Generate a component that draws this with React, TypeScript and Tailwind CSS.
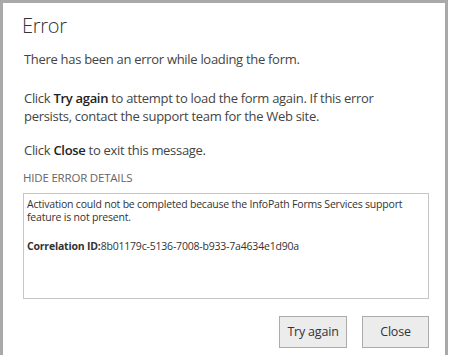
import React from "react";

export default function App() {
  return (
    <div className="w-[451px] h-[355px] bg-white overflow-hidden font-['Open_Sans',sans-serif]">
      <div className="w-[448px] h-[355px] border-l-[3px] border-t-[3px] border-r-[3px] border-[#a9a9a9] bg-white text-[#444]">
        <div className="pl-[20px] pr-[16px] pt-[10px]">
          <div className="text-[20px] leading-[26px] font-light tracking-[-0.3px] text-[#333] -ml-[1px]">Error</div>
          <div className="mt-[11px] text-[13px] leading-[18px] tracking-[-0.3px]">
            <p className="pl-[1px]">There has been an error while loading the form.</p>
            <p className="mt-[21px] pl-[1px]">
              Click <b className="font-semibold text-[#222]">Try again</b> to attempt to load the form again. If this error
              <br />
              persists, contact the support team for the Web site.
            </p>
            <p className="mt-[16px] pl-[1px]">
              Click <b className="font-semibold text-[#222]">Close</b> to exit this message.
            </p>
          </div>
          <div className="mt-[12px] text-[11.5px] leading-[14px] text-[#666] uppercase tracking-[-0.2px]">Hide error details</div>
          <div className="mt-[8px] w-[406px] h-[106px] border border-[#c6c6c6] px-[3px] pt-[4px] text-[10.5px] leading-[13px] tracking-[-0.2px] text-[#333]">
            <div>Activation could not be completed because the InfoPath Forms Services support feature is not present.</div>
            <div className="mt-[16px]">
              <b className="font-bold">Correlation ID:</b>8b01179c-5136-7008-b933-7a4634e1d90a
            </div>
          </div>
          <div className="mt-[17px] w-[406px] flex justify-end gap-[15px]">
            <button className="w-[68px] h-[32px] border border-[#ababab] bg-[#ececec] text-[12.5px] tracking-[-0.2px] text-[#333]">Try again</button>
            <button className="w-[67px] h-[32px] border border-[#ababab] bg-[#ececec] text-[12.5px] tracking-[-0.2px] text-[#333]">Close</button>
          </div>
        </div>
      </div>
    </div>
  );
}
